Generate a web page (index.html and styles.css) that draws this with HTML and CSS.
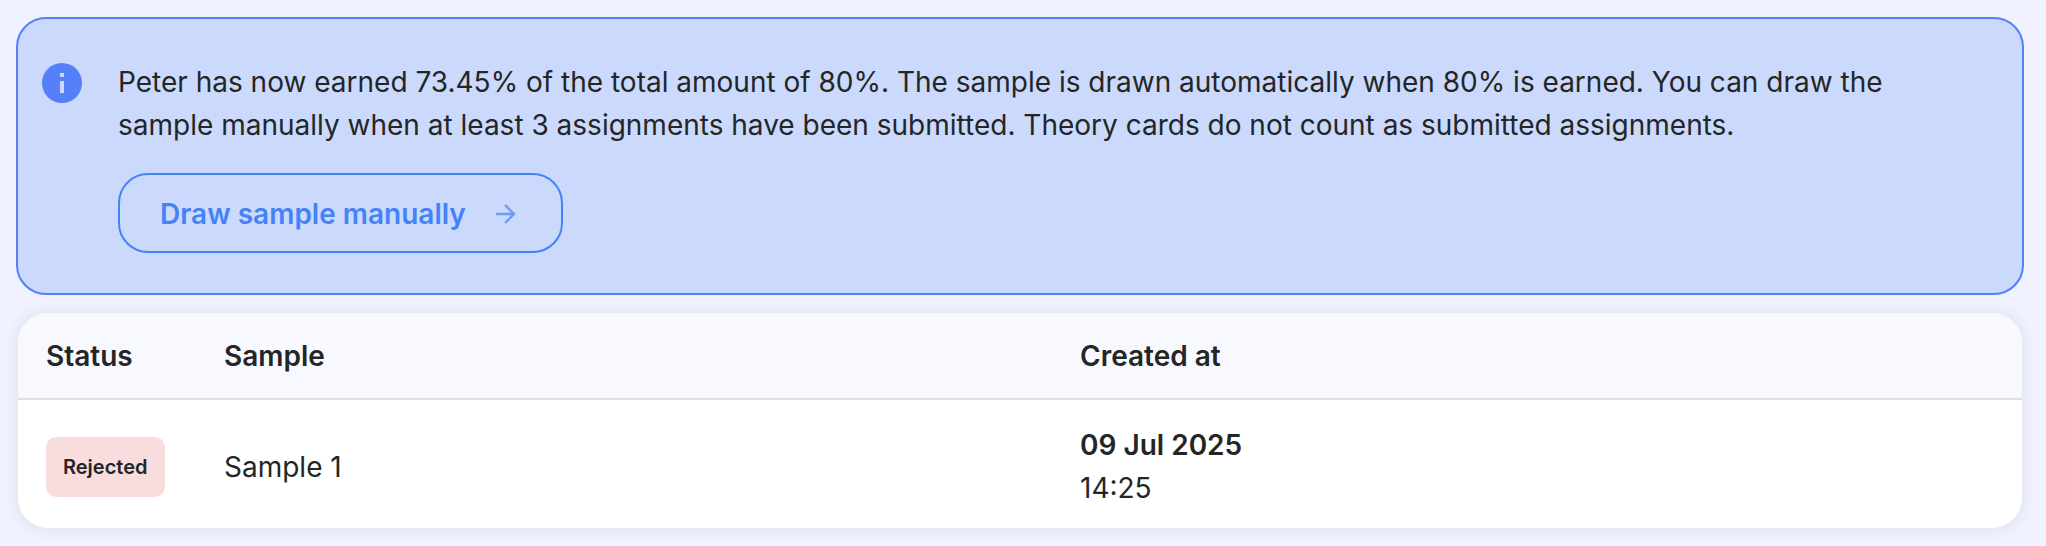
FILE: index.html
```html
<!DOCTYPE html>
<html lang="en">
<head>
    <meta charset="UTF-8">
    <meta name="viewport" content="width=device-width, initial-scale=1.0">
    <title>Samples</title>
    <link rel="stylesheet" href="styles.css">
</head>
<body>

<div class="alert">
    <svg class="alert-icon" viewBox="0 0 40 40" aria-hidden="true">
        <circle cx="20" cy="20" r="20" fill="#5580fa"/>
        <path d="M18 10h4v4h-4zM18 18h4v12h-4z" fill="#ccd9fc"/>
    </svg>
    <div class="alert-content">
        <p>Peter has now earned 73.45% of the total amount of 80%. The sample is drawn automatically when 80% is earned. You can draw the sample manually when at least 3 assignments have been submitted. Theory cards do not count as submitted assignments.</p>
        <button type="button" class="btn">
            Draw sample manually
            <svg class="btn-icon" viewBox="0 0 20 20" aria-hidden="true">
                <path d="M0 10h18M9 1l9 9-9 9" fill="none" stroke="currentColor" stroke-width="2.4"/>
            </svg>
        </button>
    </div>
</div>

<div class="card">
    <table class="samples">
        <thead>
            <tr>
                <th class="col-status">Status</th>
                <th class="col-sample">Sample</th>
                <th>Created at</th>
            </tr>
        </thead>
        <tbody>
            <tr>
                <td><span class="badge">Rejected</span></td>
                <td>Sample 1</td>
                <td><strong>09 Jul 2025</strong><br>14:25</td>
            </tr>
        </tbody>
    </table>
</div>

</body>
</html>
```
FILE: styles.css
```css
* {
    box-sizing: border-box;
}
body {
    margin: 0;
    padding: 17px 22px 16px 16px;
    background-color: #f0f2ff;
    color: #242626;
    font-family: Inter, sans-serif;
    font-size: 28px;
    line-height: 43px;
}
.alert {
    display: flex;
    gap: 36px;
    padding: 42px 96px 40px 24px;
    margin-bottom: 18px;
    background-color: #cbd9fc;
    border: 2px solid #5580fa;
    border-radius: 30px;
}
.alert-icon {
    flex: none;
    width: 40px;
    height: 40px;
    margin-top: 2px;
}
.alert-content p {
    margin: 0 0 26px;
}
.btn {
    display: inline-flex;
    align-items: center;
    gap: 30px;
    height: 80px;
    padding: 2px 45px 0 40px;
    border: 2px solid #4482f8;
    border-radius: 30px;
    background: none;
    color: #4482f8;
    font: inherit;
    font-weight: 600;
    cursor: pointer;
}
.btn-icon {
    width: 20px;
    height: 20px;
    opacity: 0.7;
}
.card {
    background-color: #fff;
    border-radius: 30px;
    box-shadow: 0 0 0 2px #e8e9f2, 0 0 16px rgba(40, 40, 60, 0.1);
    margin: 0 2px;
    overflow: hidden;
}
.samples {
    width: 100%;
    border-collapse: collapse;
    table-layout: fixed;
}
.samples th,
.samples td {
    padding: 22px 28px 20px;
    text-align: left;
}
.samples td {
    padding-top: 24px;
    padding-bottom: 18px;
}
.samples th {
    background-color: #f8f9ff;
    border-bottom: 2px solid #dddee8;
    font-weight: 600;
}
.col-status {
    width: 178px;
}
.col-sample {
    width: 856px;
}
.badge {
    display: inline-block;
    padding: 0 17px;
    border-radius: 10px;
    background-color: #f9dcdd;
    font-size: 20px;
    font-weight: 600;
    line-height: 60px;
}
.samples strong {
    font-weight: 600;
}
```
